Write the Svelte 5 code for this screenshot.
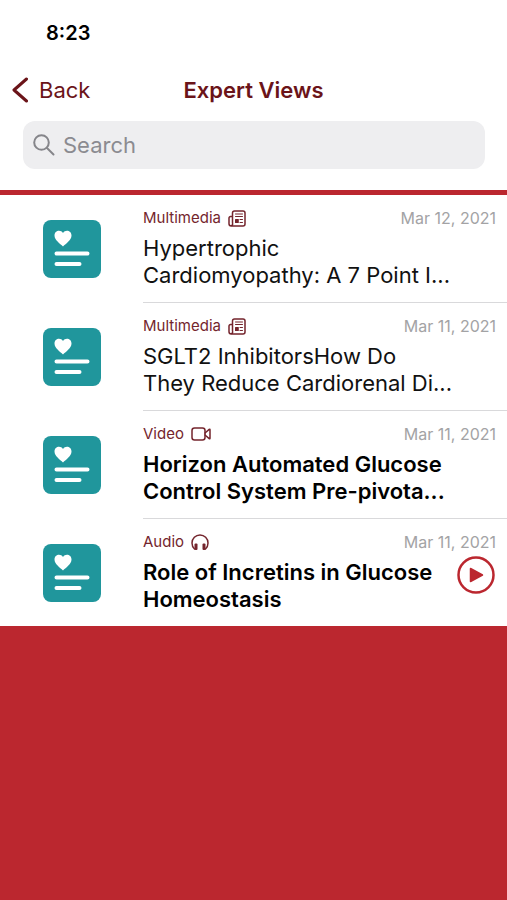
<script lang="ts">
	type Kind = 'Multimedia' | 'Video' | 'Audio';

	interface Article {
		id: number;
		kind: Kind;
		date: string;
		title: string;
		unread: boolean;
	}

	const articles: Article[] = [
		{
			id: 1,
			kind: 'Multimedia',
			date: 'Mar 12, 2021',
			title: 'Hypertrophic\nCardiomyopathy: A 7 Point I...',
			unread: false
		},
		{
			id: 2,
			kind: 'Multimedia',
			date: 'Mar 11, 2021',
			title: 'SGLT2 InhibitorsHow Do\nThey Reduce Cardiorenal Di...',
			unread: false
		},
		{
			id: 3,
			kind: 'Video',
			date: 'Mar 11, 2021',
			title: 'Horizon Automated Glucose\nControl System Pre-pivota...',
			unread: true
		},
		{
			id: 4,
			kind: 'Audio',
			date: 'Mar 11, 2021',
			title: 'Role of Incretins in Glucose\nHomeostasis',
			unread: true
		}
	];

	let query = $state('');
	let playing = $state(false);

	let visible = $derived(
		articles.filter((a) => a.title.toLowerCase().includes(query.trim().toLowerCase()))
	);
</script>

<header>
	<div class="status">8:23</div>
	<nav>
		<button class="back" type="button">
			<svg width="16" height="26" viewBox="0 0 16 26" aria-hidden="true">
				<path d="M14.500 2 2 13 14.500 24" />
			</svg>
			Back
		</button>
		<h1>Expert Views</h1>
	</nav>
	<label class="search">
		<svg width="22" height="22" viewBox="0 0 22 22" aria-hidden="true">
			<circle cx="8.500" cy="8.500" r="7.300" />
			<path d="m14 14 6.500 6.500" />
		</svg>
		<input type="search" placeholder="Search" aria-label="Search" bind:value={query} />
	</label>
</header>

<main>
	{#each visible as article (article.id)}
		<article>
			<svg class="thumb" width="58" height="58" viewBox="0 0 58 58" aria-hidden="true">
				<rect width="58" height="58" rx="8" fill="#20969c" />
				<path
					d="M20 26.500C17 23.500 11.500 20 11.500 15.500C11.500 10 18 9.300 20 13C22 9.300 28.500 10 28.500 15.500C28.500 20 23 23.500 20 26.500Z"
					fill="#fff"
				/>
				<path d="M13.500 33.500H44.500M13.500 44H36.500" stroke="#fff" stroke-width="4" stroke-linecap="round" />
			</svg>
			<div class="body">
				<div class="meta">
					<span class="kind">{article.kind}</span>
					{#if article.kind === 'Multimedia'}
						<svg class="icon" width="18" height="17" viewBox="0 0 18 17" aria-hidden="true">
							<path
								d="M4.500 13V3a2 2 0 0 1 2-2H15a2 2 0 0 1 2 2v11a2 2 0 0 1-2 2H3.200A2.200 2.200 0 0 1 1 13.800V8a1.500 1.500 0 0 1 1.500-1.500h2M4.500 13a2 2 0 0 1-2 2.800"
							/>
							<path class="thin" d="M7.500 4h7M7.500 6.500h7M12 9.500h2.500M12 12.500h2.500" />
							<rect class="solid" x="7" y="9" width="3.800" height="4" rx="0.500" />
						</svg>
					{:else if article.kind === 'Video'}
						<svg class="icon" width="20" height="14" viewBox="0 0 20 14" aria-hidden="true">
							<rect x="1" y="1" width="13" height="12" rx="2.500" />
							<path d="m14 6 4.200-3.600q.8-.5.8.4v8.400q0 .9-.8.4L14 8" />
						</svg>
					{:else}
						<svg class="icon" width="18" height="17" viewBox="0 0 18 17" aria-hidden="true">
							<path d="M3.500 15C1.800 13.500 1 11.500 1 9a8 8 0 0 1 16 0c0 2.500-.8 4.500-2.500 6" />
							<rect class="solid" x="3.500" y="9.500" width="3" height="6.500" rx="1" />
							<rect class="solid" x="11.500" y="9.500" width="3" height="6.500" rx="1" />
						</svg>
					{/if}
					<time>{article.date}</time>
				</div>
				<h2 class:unread={article.unread}>{article.title}</h2>
				{#if article.kind === 'Audio'}
					<button
						class="play"
						type="button"
						aria-label="Play"
						aria-pressed={playing}
						onclick={() => (playing = !playing)}
					>
						<svg width="38" height="38" viewBox="0 0 38 38" aria-hidden="true">
							<circle cx="19" cy="19" r="17.500" fill="none" stroke="#bb272f" stroke-width="2.500" />
							<path
								d="M13.500 12.500v13l12-6.500z"
								fill="#bb272f"
								stroke="#bb272f"
								stroke-width="1.500"
								stroke-linejoin="round"
							/>
						</svg>
					</button>
				{/if}
			</div>
		</article>
	{/each}
</main>

<style>
	:global(body) {
		margin: 0;
		background: #bb272f;
		font-family: Inter, 'Liberation Sans', sans-serif;
	}

	header {
		background: #fff;
		border-bottom: 5px solid #bb272f;
		padding-bottom: 21px;
	}

	.status {
		padding: 20px 46px 0;
		font-size: 20px;
		font-weight: 600;
		line-height: 26px;
	}

	nav {
		display: grid;
		grid-template-columns: 1fr auto 1fr;
		align-items: center;
		height: 30px;
		margin-top: 29px;
		padding: 0 12px;
		color: #6b1419;
	}

	h1 {
		margin: 0;
		font-size: 22px;
		font-weight: 600;
		line-height: 30px;
	}

	button {
		border: 0;
		padding: 0;
		background: none;
		color: inherit;
		font: inherit;
		cursor: pointer;
	}

	.back {
		display: flex;
		align-items: center;
		justify-self: start;
		gap: 11px;
		font-size: 22px;
		line-height: 30px;
	}

	.back svg {
		fill: none;
		stroke: currentColor;
		stroke-width: 3;
		stroke-linecap: round;
		stroke-linejoin: round;
	}

	.search {
		display: flex;
		align-items: center;
		gap: 8px;
		height: 48px;
		margin: 16px 22px 0 23px;
		padding: 0 10px;
		border-radius: 12px;
		background: #eeeef0;
		color: #85858a;
	}

	.search svg {
		flex: none;
		fill: none;
		stroke: currentColor;
		stroke-width: 2;
		stroke-linecap: round;
	}

	.search input {
		flex: 1;
		min-width: 0;
		border: 0;
		padding: 0;
		outline: none;
		background: none;
		appearance: none;
		color: #000;
		font: inherit;
		font-size: 22px;
		line-height: 30px;
	}

	.search input::placeholder {
		color: #8b8b90;
		opacity: 1;
	}

	main {
		background: #fff;
	}

	article {
		display: flex;
	}

	.thumb {
		flex: none;
		margin: 25px 42px 0 43px;
	}

	.body {
		flex: 1;
		min-width: 0;
		display: grid;
		grid-template-columns: 1fr auto;
		padding: 13px 11px 13px 0;
		border-bottom: 1px solid #d9d9db;
	}

	article:last-child .body {
		border-bottom: 0;
	}

	.meta {
		grid-column: 1 / -1;
		display: flex;
		align-items: center;
		gap: 7px;
		font-size: 15px;
		line-height: 20px;
		color: #74252d;
	}

	.icon {
		fill: none;
		stroke: currentColor;
		stroke-width: 1.5;
		stroke-linecap: round;
		stroke-linejoin: round;
	}

	.icon .thin {
		stroke-width: 1;
	}

	.icon .solid {
		fill: currentColor;
		stroke: none;
	}

	time {
		margin-left: auto;
		font-size: 16px;
		color: #a3a3a5;
	}

	h2 {
		margin: 0;
		padding-top: 7px;
		font-size: 22px;
		font-weight: 400;
		line-height: 27px;
		white-space: pre;
		color: #111;
	}

	h2.unread {
		font-weight: 600;
		color: #000;
	}

	.play {
		align-self: start;
		width: 38px;
		height: 38px;
		margin: 4px 1px 0 0;
	}

	.play svg {
		display: block;
	}
</style>
